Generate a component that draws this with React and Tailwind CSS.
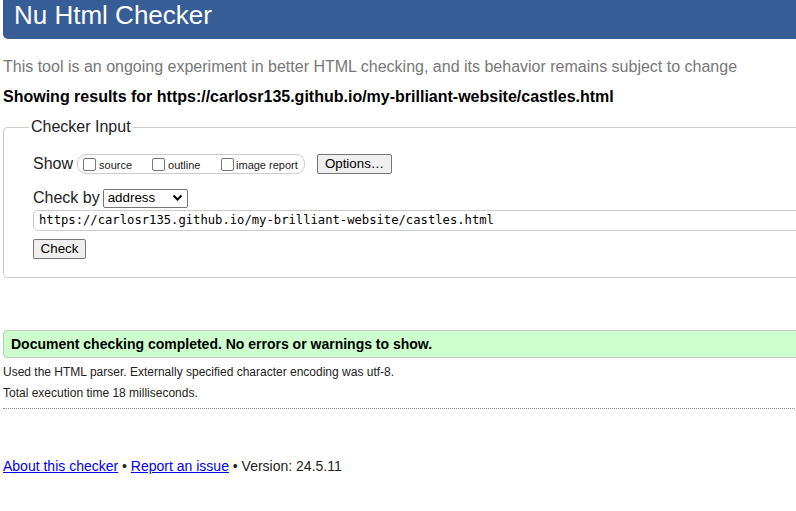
import React from "react";

function Box() {
  return (
    <span className="inline-block w-[13px] h-[13px] border border-[#767676] rounded-[2px] bg-white shrink-0" />
  );
}

export default function App() {
  return (
    <div className="w-[796px] h-[511px] overflow-hidden bg-white text-[#222] font-['Liberation_Sans',Arial,sans-serif]">
      <div className="w-[840px] pl-[3px]">
        <div className="h-[39px] bg-[#365d95] rounded-bl-[5px] pl-[11px]">
          <h1 className="text-[26px] leading-[30px] text-white font-normal">Nu Html Checker</h1>
        </div>
        <p className="mt-[19px] text-[16px] leading-[18px] text-[#777]">
          This tool is an ongoing experiment in better HTML checking, and its behavior remains subject to change
        </p>
        <p className="mt-[12px] text-[16px] leading-[18px] font-bold text-black">
          Showing results for https://carlosr135.github.io/my-brilliant-website/castles.html
        </p>
        <fieldset className="mt-[12px] border border-[#ccc] rounded-[4px] pl-[29px] pb-[18px]">
          <legend className="ml-[-4px] px-[2px] text-[16px] leading-[18px]">Checker Input</legend>
          <div className="mt-[18px] h-[20px] flex items-center">
            <span className="text-[16px] leading-[18px]">Show</span>
            <div className="ml-[4px] h-[20px] w-[228px] border border-[#ccc] rounded-[9px] flex items-center pl-[5px] text-[11px] leading-[13px]">
              <div className="w-[69px] flex items-center">
                <Box />
                <span className="ml-[3px] mt-[2px]">source</span>
              </div>
              <div className="w-[69px] flex items-center">
                <Box />
                <span className="ml-[3px] mt-[2px]">outline</span>
              </div>
              <div className="flex items-center">
                <Box />
                <span className="ml-[2px] mt-[2px]">image report</span>
              </div>
            </div>
            <div className="ml-[12px] h-[20px] w-[75px] border border-[#767676] rounded-[2px] bg-[#efefef] flex items-center justify-center text-[13.33px] text-black">
              Options…
            </div>
          </div>
          <div className="mt-[14px] h-[20px] flex items-center">
            <span className="text-[16px] leading-[18px]">Check by</span>
            <div className="ml-[3px] h-[19px] w-[85px] border border-[#767676] rounded-[2px] bg-white flex items-center pl-[4px] pr-[4px] text-[13.33px] text-black">
              <span className="flex-1">address</span>
              <svg width="11" height="8" viewBox="0 0 11 8">
                <path d="M1.5 1.5 L5.5 5.5 L9.5 1.5" fill="none" stroke="#000" strokeWidth="2" />
              </svg>
            </div>
          </div>
          <div className="mt-[2px] h-[21px] border border-[#ccc] rounded-[5px] flex items-center pl-[5px] font-['DejaVu_Sans_Mono',monospace] text-[12.2px] text-black">
            https://carlosr135.github.io/my-brilliant-website/castles.html
          </div>
          <div className="mt-[8px] h-[20px] w-[53px] border border-[#767676] rounded-[2px] bg-[#efefef] flex items-center justify-center text-[13.33px] text-black">
            Check
          </div>
        </fieldset>
        <div className="mt-[52px] h-[28px] border border-[#c4c4c4] rounded-[4px] bg-[#ccffcc] flex items-center pl-[7px]">
          <span className="text-[14px] font-bold text-black">Document checking completed. No errors or warnings to show.</span>
        </div>
        <p className="mt-[7px] text-[12px] leading-[14px]">Used the HTML parser. Externally specified character encoding was utf-8.</p>
        <p className="mt-[7px] text-[12px] leading-[14px]">Total execution time 18 milliseconds.</p>
        <div className="mt-[8px] w-[792px] border-t border-dotted border-[#888]" />
        <p className="mt-[49px] text-[14px] leading-[16px]">
          <a href="#" className="text-[#0000ee] underline">About this checker</a>
          {" • "}
          <a href="#" className="text-[#0000ee] underline">Report an issue</a>
          {" • Version: 24.5.11"}
        </p>
      </div>
    </div>
  );
}
